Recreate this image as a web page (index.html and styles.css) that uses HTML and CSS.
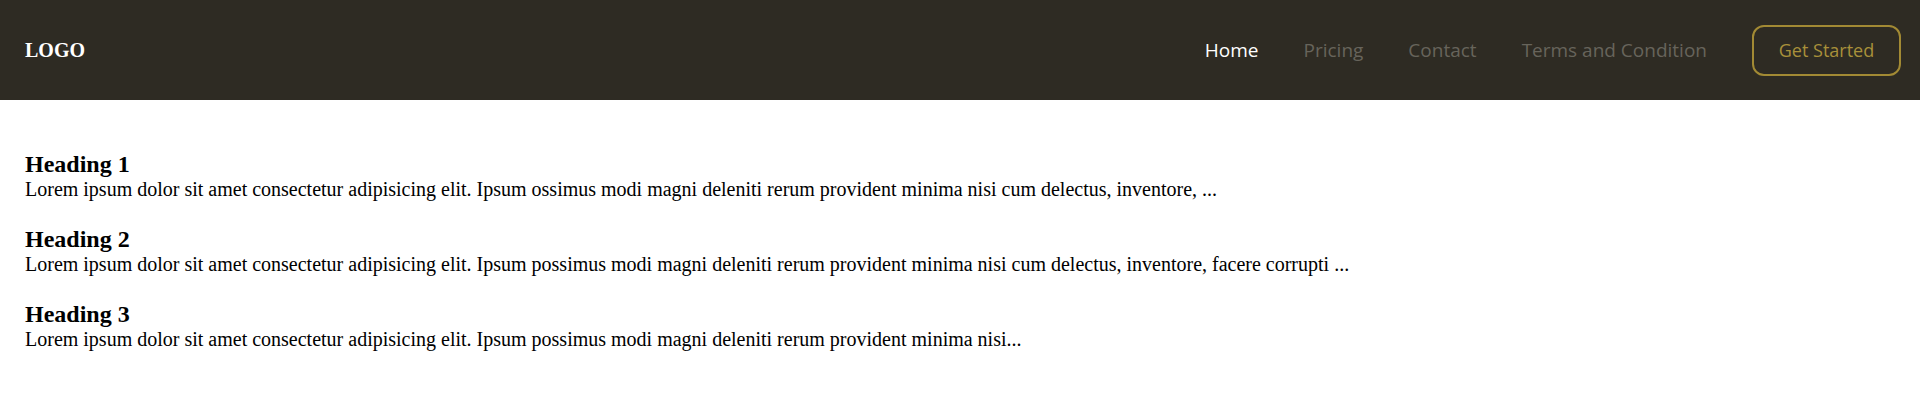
FILE: index.html
```html
<!DOCTYPE html>
<html lang="en">
<head>
<meta charset="utf-8">
<title>Landing</title>
<link rel="stylesheet" href="styles.css">
</head>
<body>
<header class="topbar">
  <div class="logo">LOGO</div>
  <div class="right">
    <nav class="nav">
      <a class="nav-link active" href="#">Home</a>
      <a class="nav-link" href="#">Pricing</a>
      <a class="nav-link" href="#">Contact</a>
      <a class="nav-link" href="#">Terms and Condition</a>
    </nav>
    <a class="cta" href="#">Get Started</a>
  </div>
</header>
<main class="content">
  <section class="item">
    <h2 class="item-title">Heading 1</h2>
    <p class="item-text">Lorem ipsum dolor sit amet consectetur adipisicing elit. Ipsum ossimus modi magni deleniti rerum provident minima nisi cum delectus, inventore, ...</p>
  </section>
  <section class="item">
    <h2 class="item-title">Heading 2</h2>
    <p class="item-text">Lorem ipsum dolor sit amet consectetur adipisicing elit. Ipsum possimus modi magni deleniti rerum provident minima nisi cum delectus, inventore, facere corrupti ...</p>
  </section>
  <section class="item">
    <h2 class="item-title">Heading 3</h2>
    <p class="item-text">Lorem ipsum dolor sit amet consectetur adipisicing elit. Ipsum possimus modi magni deleniti rerum provident minima nisi...</p>
  </section>
</main>
</body>
</html>
```
FILE: styles.css
```css
* { box-sizing: border-box; }
html, body { margin: 0; padding: 0; background: #ffffff; }
body { font-family: "Liberation Serif", "Times New Roman", serif; color: #000; }

.topbar {
  height: 100px;
  background: #2e2b23;
  display: flex;
  align-items: center;
  justify-content: space-between;
  padding: 0 19px 0 25px;
}
.logo {
  color: #ffffff;
  font-family: "Liberation Serif", serif;
  font-weight: bold;
  font-size: 20px;
}
.right {
  display: flex;
  align-items: center;
  gap: 45px;
}
.nav {
  display: flex;
  align-items: center;
  gap: 45px;
}
.nav-link, .cta {
  font-family: "Comic Sans MS", "Open Sans", sans-serif;
  font-size: 19px;
  text-decoration: none;
}
.nav-link { color: #67645b; }
.nav-link.active { color: #ffffff; }
.cta {
  display: flex;
  align-items: center;
  justify-content: center;
  width: 149px;
  height: 51px;
  border: 2px solid #a28a34;
  border-radius: 12px;
  color: #a8903a;
  font-size: 18px;
}

.content {
  padding: 51px 25px 28px;
  display: flex;
  flex-direction: column;
  gap: 25px;
}
.item-title {
  margin: 0;
  font-size: 24px;
  font-weight: bold;
}
.item-text {
  margin: 0;
  font-size: 20px;
}
```
